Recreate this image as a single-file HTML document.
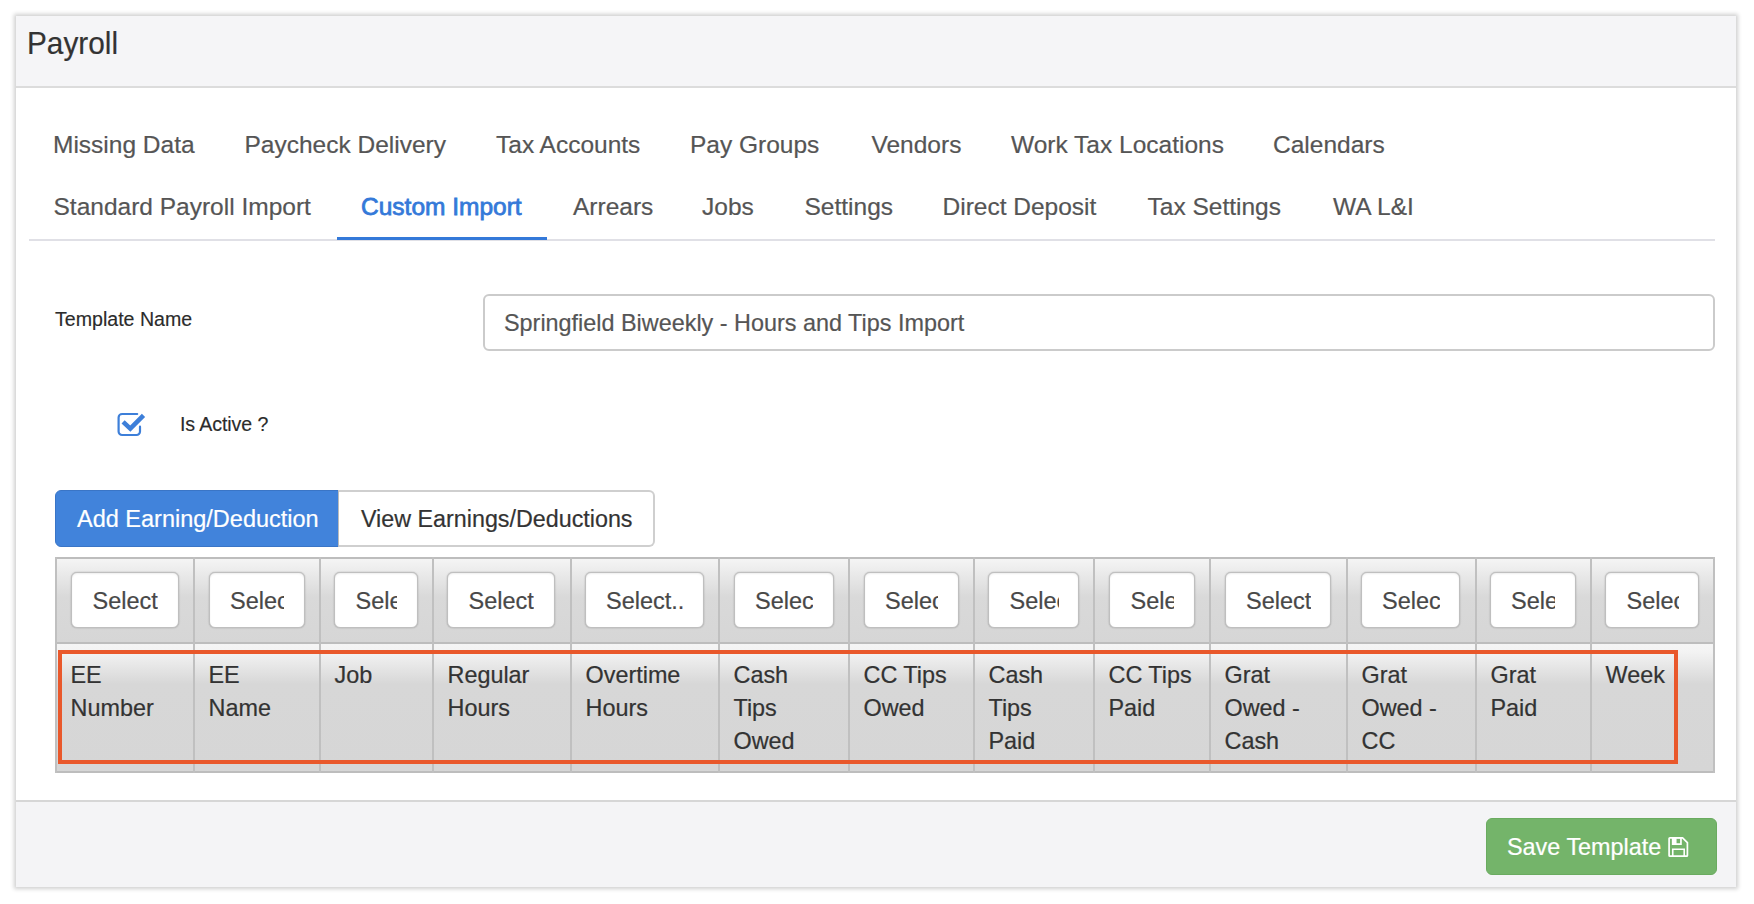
<!DOCTYPE html>
<html><head><meta charset="utf-8">
<style>
*{box-sizing:border-box;margin:0;padding:0}
html,body{width:1754px;height:904px;background:#fff;overflow:hidden;font-family:"Liberation Sans",sans-serif;}
.panel{position:absolute;left:16px;top:16px;width:1720px;height:871px;background:#fff;box-shadow:0 0 4px 2px rgba(0,0,0,.19);}
.hdr{position:absolute;left:0;top:0;width:1720px;height:72px;background:#f5f5f7;border-bottom:2px solid #dcdcdc;}
.title{position:absolute;left:11px;top:9px;font-size:31.5px;line-height:36px;color:#333;-webkit-text-stroke:0.2px #333;transform:scaleX(0.945);transform-origin:0 0}
.t{position:absolute;font-size:24.5px;line-height:28px;color:#555;white-space:nowrap;-webkit-text-stroke:0.2px #555}
.tabline{position:absolute;left:13px;top:223px;width:1686px;height:2px;background:#e0e0e6}
.active{position:absolute;left:321px;top:221px;width:210px;height:3px;background:#3479d9}
.lbl{position:absolute;font-size:19.6px;line-height:24px;color:#2b2b2b;white-space:nowrap;-webkit-text-stroke:0.15px #2b2b2b}
.inp{position:absolute;left:467px;top:278px;width:1232px;height:57px;border:2px solid #cbcbcb;border-radius:6px;background:#fff;}
.inp span{position:absolute;left:19px;top:14px;font-size:23.4px;line-height:26px;color:#555;white-space:nowrap;-webkit-text-stroke:0.2px #555}
.btn{position:absolute;top:474px;height:57px;font-size:23.5px;line-height:57px;white-space:nowrap;-webkit-text-stroke:0.2px currentColor}
.b1{left:39px;width:284px;background:#4183db;border:1px solid #3a75c6;border-radius:6px 0 0 6px;color:#fff;padding-left:21px}
.b2{left:322px;width:317px;background:#fff;border:2px solid #cfcfcf;border-left:1px solid #bbb;border-radius:0 6px 6px 0;color:#333;padding-left:22px;line-height:55px;font-size:23.3px}
.trow{position:absolute;background:linear-gradient(to bottom,#f6f6f6 0,#d9d9d9 40px,#d6d6d6 100%)}
.trow2{position:absolute;background:linear-gradient(to bottom,#f5f5f5 0,#f3f3f3 8px,#d7d7d7 40px,#d6d6d6 100%)}
.hb{position:absolute;height:2px;background:#bdbdbd}
.vb{position:absolute;width:2px;background:#c0c0c0}
.sel{position:absolute;height:56px;background:#fff;border:1px solid #bfbfbf;border-radius:6px;box-shadow:0 0 1.5px rgba(0,0,0,.3),inset 0 1px 2px rgba(0,0,0,.07);overflow:hidden;padding:0 19.5px 0 20.5px}
.sel span{display:block;font-size:23.5px;line-height:56px;color:#484848;-webkit-text-stroke:0.2px #484848;white-space:nowrap;overflow:hidden}
.th{position:absolute;font-size:23.4px;line-height:33px;color:#333;white-space:nowrap;-webkit-text-stroke:0.2px #333}
.orange{position:absolute;border:4px solid #e9582b}
.foot{position:absolute;left:0;top:784px;width:1720px;height:87px;background:#f4f4f6;border-top:2px solid #d6d6d6}
.save{position:absolute;left:1470px;top:802px;width:231px;height:57px;background:#74b46a;border:1px solid #6aab60;border-radius:6px;color:#fff;font-size:23.4px;line-height:57px;padding-left:20px;-webkit-text-stroke:0.2px #fff;white-space:nowrap}
</style></head><body>
<div class="panel">
  <div class="hdr"><div class="title">Payroll</div></div>
  <!-- tabs row 1 -->
  <div class="t" style="left:37px;top:115px">Missing Data</div>
  <div class="t" style="left:228.5px;top:115px">Paycheck Delivery</div>
  <div class="t" style="left:480px;top:115px">Tax Accounts</div>
  <div class="t" style="left:674px;top:115px">Pay Groups</div>
  <div class="t" style="left:855.5px;top:115px">Vendors</div>
  <div class="t" style="left:995px;top:115px">Work Tax Locations</div>
  <div class="t" style="left:1257px;top:115px">Calendars</div>
  <!-- tabs row 2 -->
  <div class="t" style="left:37.5px;top:177px">Standard Payroll Import</div>
  <div class="t" style="left:345px;top:177px;color:#3479d9;-webkit-text-stroke:0.8px #3479d9">Custom Import</div>
  <div class="t" style="left:557px;top:177px">Arrears</div>
  <div class="t" style="left:686px;top:177px">Jobs</div>
  <div class="t" style="left:788.5px;top:177px">Settings</div>
  <div class="t" style="left:926.5px;top:177px">Direct Deposit</div>
  <div class="t" style="left:1131.5px;top:177px">Tax Settings</div>
  <div class="t" style="left:1317px;top:177px">WA L&amp;I</div>
  <div class="tabline"></div>
  <div class="active"></div>

  <div class="lbl" style="left:39px;top:291px">Template Name</div>
  <div class="inp"><span>Springfield Biweekly - Hours and Tips Import</span></div>

  <svg style="position:absolute;left:99px;top:395px" width="34" height="30" viewBox="0 0 34 30">
    <path d="M22.2 3 H7.1 A3.5 3.5 0 0 0 3.6 6.5 V20.5 A3.5 3.5 0 0 0 7.1 24 H21.5 A3.5 3.5 0 0 0 25 20.5 V15.7" fill="none" stroke="#3d7fd9" stroke-width="2.2" stroke-linecap="round"/>
    <path d="M8.1 10.8 L15.3 17.6 L28.5 4.4" fill="none" stroke="#3d7fd9" stroke-width="4.6" stroke-linejoin="miter"/>
  </svg>
  <div class="lbl" style="left:164px;top:396px;letter-spacing:-0.1px">Is Active ?</div>

  <div class="btn b1">Add Earning/Deduction</div>
  <div class="btn b2">View Earnings/Deductions</div>

  <div id="tbl">
<div class="trow" style="left:39px;top:541px;width:1660px;height:87px"></div>
<div class="trow2" style="left:39px;top:628px;width:1660px;height:129px"></div>
<div class="hb" style="left:39px;top:541px;width:1660px"></div>
<div class="hb" style="left:39px;top:626px;width:1660px"></div>
<div class="hb" style="left:39px;top:755px;width:1660px"></div>
<div class="vb" style="left:39px;top:541px;height:216px"></div>
<div class="vb" style="left:177px;top:541px;height:216px"></div>
<div class="vb" style="left:303px;top:541px;height:216px"></div>
<div class="vb" style="left:416px;top:541px;height:216px"></div>
<div class="vb" style="left:554px;top:541px;height:216px"></div>
<div class="vb" style="left:702px;top:541px;height:216px"></div>
<div class="vb" style="left:832px;top:541px;height:216px"></div>
<div class="vb" style="left:957px;top:541px;height:216px"></div>
<div class="vb" style="left:1077px;top:541px;height:216px"></div>
<div class="vb" style="left:1193px;top:541px;height:216px"></div>
<div class="vb" style="left:1330px;top:541px;height:216px"></div>
<div class="vb" style="left:1459px;top:541px;height:216px"></div>
<div class="vb" style="left:1574px;top:541px;height:216px"></div>
<div class="vb" style="left:1697px;top:541px;height:216px"></div>
<div class="sel" style="left:55px;top:556px;width:107.5px"><span>Select...</span></div>
<div class="th" style="left:54.5px;top:643.3px">EE<br>Number</div>
<div class="sel" style="left:192.5px;top:556px;width:96.0px"><span>Select...</span></div>
<div class="th" style="left:192.5px;top:643.3px">EE<br>Name</div>
<div class="sel" style="left:318px;top:556px;width:83.5px"><span>Select...</span></div>
<div class="th" style="left:318.5px;top:643.3px">Job</div>
<div class="sel" style="left:431px;top:556px;width:107.5px"><span>Select...</span></div>
<div class="th" style="left:431.5px;top:643.3px">Regular<br>Hours</div>
<div class="sel" style="left:568.5px;top:556px;width:119.5px"><span>Select...</span></div>
<div class="th" style="left:569.5px;top:643.3px">Overtime<br>Hours</div>
<div class="sel" style="left:717.5px;top:556px;width:100.0px"><span>Select...</span></div>
<div class="th" style="left:717.5px;top:643.3px">Cash<br>Tips<br>Owed</div>
<div class="sel" style="left:847.5px;top:556px;width:95.0px"><span>Select...</span></div>
<div class="th" style="left:847.5px;top:643.3px">CC Tips<br>Owed</div>
<div class="sel" style="left:972px;top:556px;width:91.0px"><span>Select...</span></div>
<div class="th" style="left:972.5px;top:643.3px">Cash<br>Tips<br>Paid</div>
<div class="sel" style="left:1093px;top:556px;width:85.5px"><span>Select...</span></div>
<div class="th" style="left:1092.5px;top:643.3px">CC Tips<br>Paid</div>
<div class="sel" style="left:1208.5px;top:556px;width:106.5px"><span>Select...</span></div>
<div class="th" style="left:1208.5px;top:643.3px">Grat<br>Owed -<br>Cash</div>
<div class="sel" style="left:1344.5px;top:556px;width:99.5px"><span>Select...</span></div>
<div class="th" style="left:1345.5px;top:643.3px">Grat<br>Owed -<br>CC</div>
<div class="sel" style="left:1473.5px;top:556px;width:86.0px"><span>Select...</span></div>
<div class="th" style="left:1474.5px;top:643.3px">Grat<br>Paid</div>
<div class="sel" style="left:1589px;top:556px;width:94.0px"><span>Select...</span></div>
<div class="th" style="left:1589.5px;top:643.3px">Week</div>
<div class="orange" style="left:42px;top:634px;width:1620px;height:114px"></div>
</div><!--/tbl-->

  <div class="foot"></div>
  <div class="save">Save Template<svg style="position:absolute;left:173px;top:11px;" width="36" height="34" viewBox="0 0 36 34">
    <path d="M9.1 8.6 Q9.1 7.8 9.9 7.8 H22.6 L27.4 12.6 V25.4 Q27.4 26.2 26.6 26.2 H9.9 Q9.1 26.2 9.1 25.4 Z" fill="none" stroke="#fff" stroke-width="1.7" stroke-linejoin="round"/>
    <path d="M11.85 7.5 H21.8 V14.9 H11.85 Z M16.55 8.6 V13.2 H20.1 V8.6 Z" fill="#fff" fill-rule="evenodd"/>
    <path d="M12.75 26 V19.2 H24.2 V26" fill="none" stroke="#fff" stroke-width="1.6"/>
  </svg></div>
</div>
</body></html>
